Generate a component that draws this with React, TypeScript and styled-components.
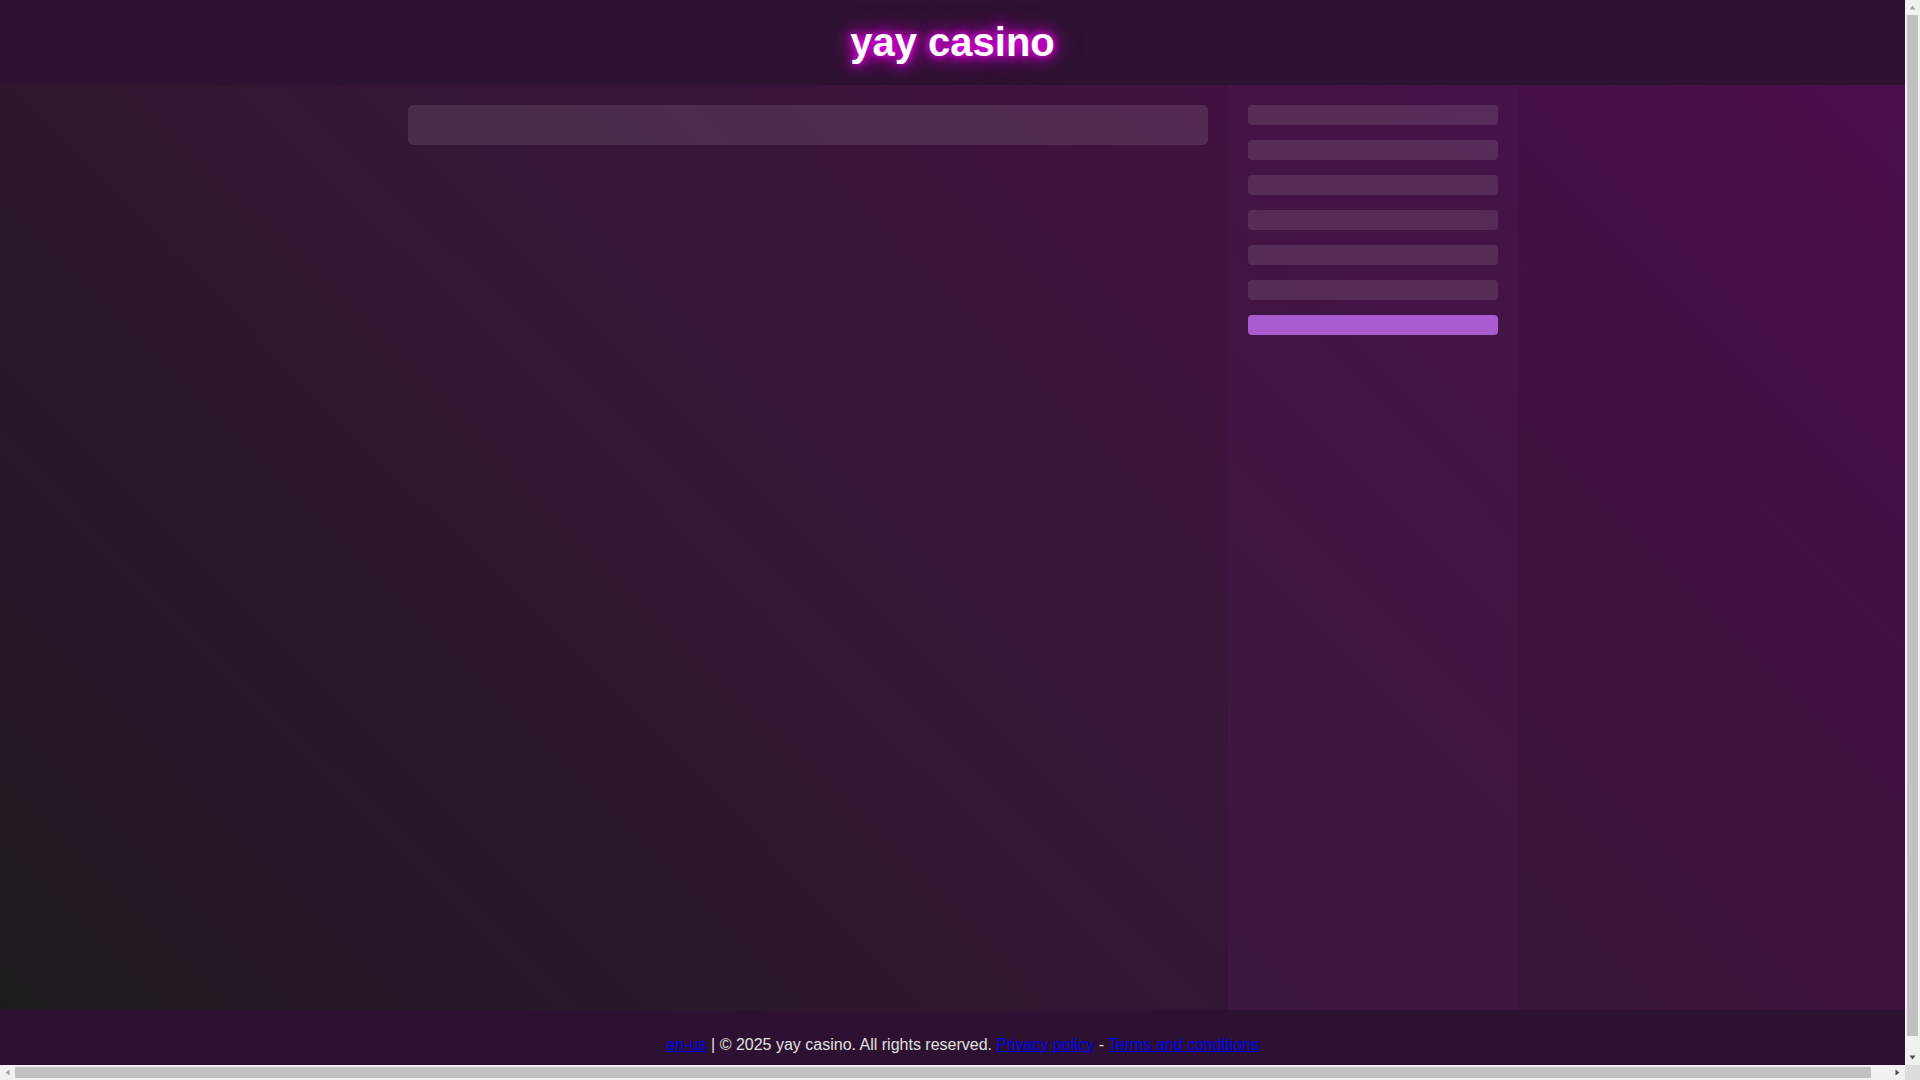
import React from "react";
import styled, { createGlobalStyle } from "styled-components";

const GlobalStyle = createGlobalStyle`
  html, body {
    margin: 0;
    padding: 0;
  }
  body {
    font-family: "Liberation Sans", Arial, sans-serif;
    background: #2d1231;
    color: #e6e6e6;
    overflow: hidden;
  }
  * { box-sizing: border-box; }
`;

const Page = styled.div`
  width: 1926px;
  min-height: 100vh;
  display: flex;
  flex-direction: column;
`;

const Header = styled.header`
  width: 1905px;
  background: #2d1231;
  padding: 20px 0;
  text-align: center;
`;

const Title = styled.h1`
  margin: 0;
  font-family: "Liberation Sans", Arial, sans-serif;
  font-size: 40px;
  line-height: 45px;
  font-weight: 700;
  color: #ffffff;
  text-shadow: 0 0 8px #ff00ff, 0 0 16px #e000e0, 0 0 28px #a000a0;
`;

const Main = styled.main`
  flex: 1;
  display: flex;
  justify-content: center;
  background: linear-gradient(45deg, #1f1a20 0%, #361536 50%, #4c0e4c 100%);
`;

const Container = styled.div`
  width: 1110px;
  display: flex;
  gap: 20px;
  align-items: stretch;
`;

const Content = styled.section`
  flex: 1;
  padding-top: 20px;
`;

const Card = styled.div`
  height: 40px;
  border-radius: 5px;
  background: rgba(255, 255, 255, 0.1);
`;

const Sidebar = styled.aside`
  width: 290px;
  padding: 20px;
  background: rgba(70, 25, 75, 0.45);
  display: flex;
  flex-direction: column;
  gap: 15px;
`;

const NavItem = styled.div<{ $active?: boolean }>`
  height: 20px;
  border-radius: 4px;
  background: ${(p) => (p.$active ? "#a95ccf" : "rgba(255, 255, 255, 0.1)")};
`;

const Footer = styled.footer`
  background: #2c1230;
  padding: 26px 0;
  text-align: center;
  font-family: "Liberation Sans", Arial, sans-serif;
  font-size: 16px;
  line-height: 18px;
  color: #e0e0e0;
`;

const FooterLink = styled.a`
  color: #0000ee;
  text-decoration: underline;
`;

/* Classic browser scrollbars shown in the reference */
const VTrack = styled.div`
  position: fixed;
  top: 0;
  right: 0;
  width: 15px;
  height: calc(100vh - 15px);
  background: #f1f1f1;
  display: flex;
  flex-direction: column;
  align-items: center;
`;

const HTrack = styled.div`
  position: fixed;
  left: 0;
  bottom: 0;
  height: 15px;
  width: calc(100vw - 15px);
  background: #f1f1f1;
  display: flex;
  align-items: center;
`;

const Corner = styled.div`
  position: fixed;
  right: 0;
  bottom: 0;
  width: 15px;
  height: 15px;
  background: #dcdcdc;
`;

const ArrowBox = styled.div`
  width: 15px;
  height: 15px;
  flex: 0 0 15px;
  display: flex;
  align-items: center;
  justify-content: center;
`;

const VThumb = styled.div`
  width: 11px;
  flex: 1;
  margin-bottom: 14px;
  background: #c1c1c1;
`;

const HThumb = styled.div`
  height: 11px;
  flex: 1;
  margin-right: 19px;
  background: #c1c1c1;
`;

type Dir = "up" | "down" | "left" | "right";

const Arrow = ({ dir, color }: { dir: Dir; color: string }) => {
  const pts: Record<Dir, string> = {
    up: "0.5,4.5 3.5,0.5 6.5,4.5",
    down: "0.5,0.5 3.5,4.5 6.5,0.5",
    left: "4.5,0.5 0.5,3.5 4.5,6.5",
    right: "0.5,0.5 4.5,3.5 0.5,6.5",
  };
  const vertical = dir === "up" || dir === "down";
  return (
    <ArrowBox>
      <svg
        width={vertical ? 7 : 5}
        height={vertical ? 5 : 7}
        viewBox={vertical ? "0 0 7 5" : "0 0 5 7"}
      >
        <polygon points={pts[dir]} fill={color} />
      </svg>
    </ArrowBox>
  );
};

export default function App() {
  const items = [0, 1, 2, 3, 4, 5];
  return (
    <>
      <GlobalStyle />
      <Page>
        <Header>
          <Title>yay casino</Title>
        </Header>
        <Main>
          <Container>
            <Content>
              <Card />
            </Content>
            <Sidebar>
              {items.map((i) => (
                <NavItem key={i} />
              ))}
              <NavItem $active />
            </Sidebar>
          </Container>
        </Main>
        <Footer>
          <FooterLink href="#">en-us</FooterLink> | © 2025 yay casino. All rights reserved.{" "}
          <FooterLink href="#">Privacy policy</FooterLink> -{" "}
          <FooterLink href="#">Terms and conditions</FooterLink>
        </Footer>
      </Page>
      <VTrack>
        <Arrow dir="up" color="#a3a3a3" />
        <VThumb />
        <Arrow dir="down" color="#505050" />
      </VTrack>
      <HTrack>
        <Arrow dir="left" color="#a3a3a3" />
        <HThumb />
        <Arrow dir="right" color="#505050" />
      </HTrack>
      <Corner />
    </>
  );
}
